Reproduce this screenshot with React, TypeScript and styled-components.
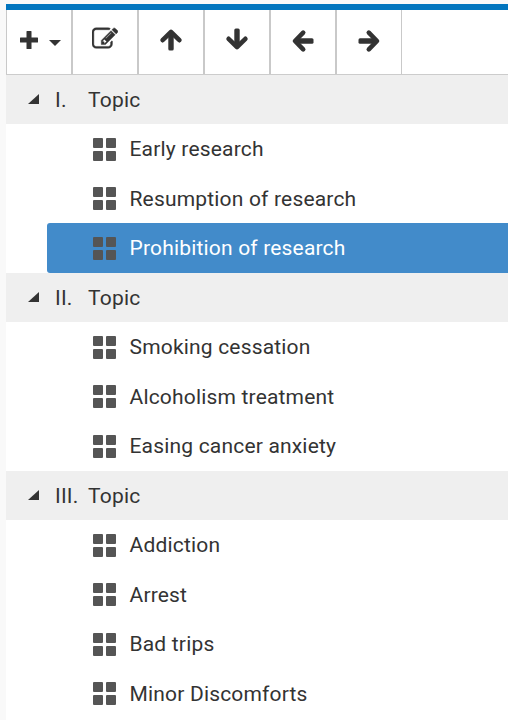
import React from "react";
import styled, { createGlobalStyle } from "styled-components";

const GlobalStyle = createGlobalStyle`
  * { box-sizing: border-box; }
  body { margin: 0; background: #f9f9f9; color: #333; font-family: Roboto, sans-serif; overflow: hidden; }
`;

const Page = styled.main`
  height: 720px;
  padding: 4px 0 0 6px;
  overflow: hidden;
`;
const Panel = styled.section`
  height: 716px;
  background: #fff;
  border-top: 6px solid #0275be;
  overflow: hidden;
`;
const Toolbar = styled.div`
  display: flex;
  height: 64.5px;
  border-bottom: 1.5px solid #ccc;
`;
const ToolButton = styled.button<{ $first?: boolean; $lift?: number }>`
  display: flex;
  align-items: center;
  justify-content: center;
  width: ${(p) => (p.$first ? 67 : 66)}px;
  padding: 0 0 ${(p) => p.$lift ?? 3}px ${(p) => (p.$first ? 2 : 0)}px;
  border: 0;
  border-right: 2px solid #c9c9c9;
  border-left: ${(p) => (p.$first ? "1px solid #c9c9c9" : "0")};
  background: #fff;
  color: #333;
  &:last-child { border-right-width: 1px; width: 65px; }
`;
const Icon = styled.svg`
  display: block;
  flex: none;
  fill: currentColor;
`;
const Caret = styled(Icon)`
  margin: 5px 0 0 11px;
`;
const Heading = styled.div`
  display: flex;
  align-items: center;
  height: 49.5px;
  padding: 1px 0 0 22px;
  background: #efefef;
  font-size: 21px;
  letter-spacing: 0.2px;
`;
const Disclosure = styled(Icon)`
  margin-top: -1px;
`;
const Numeral = styled.span`
  width: 33px;
  margin-left: 16px;
  white-space: nowrap;
`;
const Item = styled.div<{ $selected?: boolean }>`
  display: flex;
  align-items: center;
  height: 49.5px;
  margin-left: 41px;
  padding: 1px 0 0 46px;
  border-radius: 3px 0 0 3px;
  background: ${(p) => (p.$selected ? "#428bca" : "transparent")};
  color: ${(p) => (p.$selected ? "#fff" : "#333")};
  font-size: 21px;
  letter-spacing: 0.18px;
`;
const Label = styled.span`
  margin-left: 13.5px;
  white-space: nowrap;
`;
const GridIcon = styled(Icon)`
  color: #555;
`;

const sections = [
  { numeral: "I.", items: ["Early research", "Resumption of research", "Prohibition of research"] },
  { numeral: "II.", items: ["Smoking cessation", "Alcoholism treatment", "Easing cancer anxiety"] },
  { numeral: "III.", items: ["Addiction", "Arrest", "Bad trips", "Minor Discomforts"] },
];
const selected = "Prohibition of research";

const Arrow = ({ turn }: { turn: number }) => (
  <Icon width="24" height="24" viewBox="0 0 24 24">
    <g transform={`rotate(${turn} 12 12)`}>
      <rect x="9.3" y="5" width="5.4" height="17.500" rx="1.500" />
      <path
        d="M3.600 12.200 12 4l8.400 8.200"
        fill="none"
        stroke="currentColor"
        strokeWidth="4.600"
        strokeLinecap="round"
        strokeLinejoin="round"
      />
    </g>
  </Icon>
);

export default function App() {
  return (
    <Page>
      <GlobalStyle />
      <Panel>
        <Toolbar>
          <ToolButton $first aria-label="Add">
            <Icon width="18" height="18" viewBox="0 0 18 18">
              <path d="M7 0h4q.5 0 .5.5v6h6q.5 0 .5.5v4q0 .5-.5.5h-6v6q0 .5-.5.5H7q-.5 0-.5-.5v-6h-6Q0 11.500 0 11V7q0-.5.5-.5h6v-6Q6.500 0 7 0z" />
            </Icon>
            <Caret width="12" height="6" viewBox="0 0 12 6"><path d="M0 0h12L6 6z" /></Caret>
          </ToolButton>
          <ToolButton $lift={5} aria-label="Edit">
            <Icon width="26" height="26" viewBox="0 0 1792 1792">
              <path
                stroke="currentColor"
                strokeWidth="30"
                d="M888 1184l116-116-152-152-116 116v56h96v96h56zm440-720q-16-16-33 1l-350 350q-17 17-1 33t33-1l350-350q17-17 1-33zm80 594v190q0 119-84.500 203.500t-203.500 84.500h-832q-119 0-203.500-84.500t-84.500-203.500v-832q0-119 84.500-203.500t203.500-84.500h832q63 0 117 25 15 7 18 23 3 17-9 29l-49 49q-14 14-32 8-23-6-45-6h-832q-66 0-113 47t-47 113v832q0 66 47 113t113 47h832q66 0 113-47t47-113v-126q0-13 9-22l64-64q15-15 35-7t20 29zm-96-738l288 288-672 672h-288v-288zm444 132l-92 92-288-288 92-92q28-28 68-28t68 28l152 152q28 28 28 68t-28 68z"
              />
            </Icon>
          </ToolButton>
          <ToolButton $lift={4} aria-label="Move up"><Arrow turn={0} /></ToolButton>
          <ToolButton $lift={6} aria-label="Move down"><Arrow turn={180} /></ToolButton>
          <ToolButton $lift={2} aria-label="Move left"><Arrow turn={-90} /></ToolButton>
          <ToolButton $lift={2} aria-label="Move right"><Arrow turn={90} /></ToolButton>
        </Toolbar>
        {sections.map((s) => (
          <React.Fragment key={s.numeral}>
            <Heading>
              <Disclosure width="11" height="10" viewBox="0 0 11 10"><path d="M0 10 11 0v10z" /></Disclosure>
              <Numeral>{s.numeral}</Numeral>
              Topic
            </Heading>
            {s.items.map((t) => (
              <Item key={t} $selected={t === selected}>
                <GridIcon width="23" height="23" viewBox="0 0 23 23">
                  <rect width="10" height="10" rx="1" />
                  <rect x="13" width="10" height="10" rx="1" />
                  <rect y="13" width="10" height="10" rx="1" />
                  <rect x="13" y="13" width="10" height="10" rx="1" />
                </GridIcon>
                <Label>{t}</Label>
              </Item>
            ))}
          </React.Fragment>
        ))}
      </Panel>
    </Page>
  );
}
